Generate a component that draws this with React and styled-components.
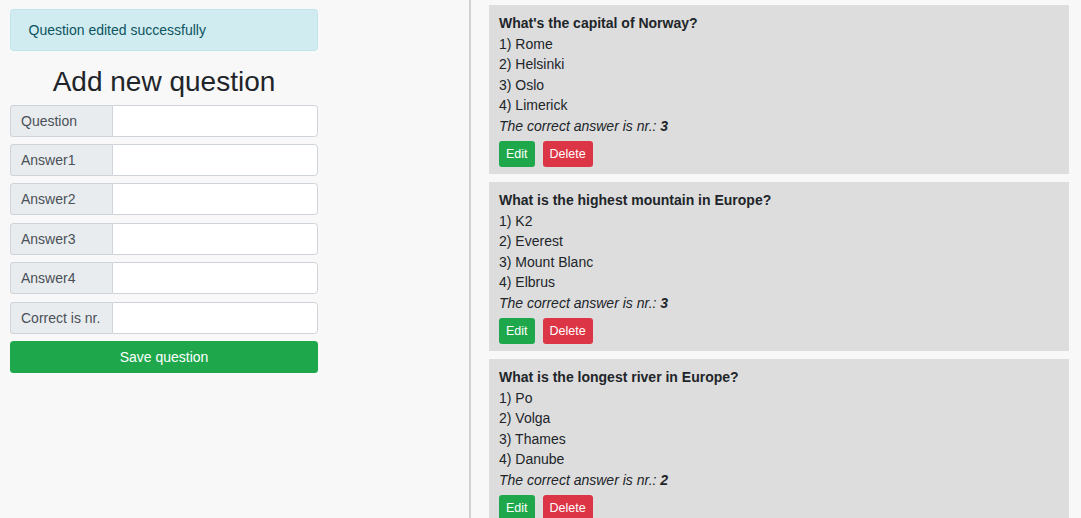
import React from "react";
import styled, { createGlobalStyle } from "styled-components";

const Global = createGlobalStyle`
  html, body { margin: 0; padding: 0; background: #f8f8f8; }
  body {
    font-family: "Liberation Sans", Arial, Helvetica, sans-serif;
    font-size: 14px;
    color: #212529;
  }
  * { box-sizing: border-box; }
`;

const Page = styled.div`
  display: flex;
  height: 518px;
  overflow: hidden;
`;

const LeftPane = styled.div`
  width: 471px;
  flex: none;
  border-right: 2px solid #d2d2d2;
  padding: 9px 0 0 10px;
`;

const Form = styled.div`
  width: 308px;
  display: flex;
  flex-direction: column;
`;

const Alert = styled.div`
  height: 42px;
  padding: 0 17.5px;
  display: flex;
  align-items: center;
  background: #d1ecf1;
  border: 1px solid #bee5eb;
  border-radius: 3.5px;
  color: #0c5460;
  margin-bottom: 14px;
`;

const Title = styled.h2`
  margin: 0 0 6px;
  font-size: 28px;
  font-weight: 400;
  line-height: 33.6px;
  text-align: center;
  color: #212529;
`;

const Group = styled.div`
  display: flex;
  height: 32px;
  margin-bottom: 7.4px;
`;

const Label = styled.span`
  width: 102px;
  flex: none;
  display: flex;
  align-items: center;
  padding-left: 10px;
  background: #e9ecef;
  border: 1px solid #ced4da;
  border-right: none;
  border-radius: 3.5px 0 0 3.5px;
  color: #495057;
`;

const Input = styled.input`
  flex: 1;
  min-width: 0;
  border: 1px solid #ced4da;
  border-radius: 0 3.5px 3.5px 0;
  background: #fff;
  font: inherit;
  padding: 0 10px;
  outline: none;
`;

const SaveButton = styled.button`
  height: 32px;
  border: none;
  border-radius: 3.5px;
  background: #1ea84b;
  color: #fff;
  font: inherit;
  font-size: 14px;
`;

const RightPane = styled.div`
  flex: 1;
  padding: 5px 12px 0 18px;
  display: flex;
  flex-direction: column;
  gap: 8px;
`;

const Card = styled.div`
  background: #dddddd;
  padding: 8px 10px 7px;
  flex: none;
`;

const Line = styled.div`
  line-height: 20.5px;
  font-weight: ${(p) => (p.$bold ? 700 : 400)};
  font-style: ${(p) => (p.$italic ? "italic" : "normal")};
`;

const Actions = styled.div`
  display: flex;
  gap: 8px;
  margin-top: 5px;
`;

const SmallButton = styled.button`
  height: 26px;
  padding: 0 7px;
  border: none;
  border-radius: 3px;
  font: inherit;
  font-size: 12.5px;
  color: #fff;
  background: ${(p) => (p.$variant === "danger" ? "#dc3545" : "#1ea84b")};
`;

const questions = [
  {
    q: "What's the capital of Norway?",
    a: ["Rome", "Helsinki", "Oslo", "Limerick"],
    c: 3,
  },
  {
    q: "What is the highest mountain in Europe?",
    a: ["K2", "Everest", "Mount Blanc", "Elbrus"],
    c: 3,
  },
  {
    q: "What is the longest river in Europe?",
    a: ["Po", "Volga", "Thames", "Danube"],
    c: 2,
  },
];

const fields = ["Question", "Answer1", "Answer2", "Answer3", "Answer4", "Correct is nr."];

export default function App() {
  return (
    <>
      <Global />
      <Page>
        <LeftPane>
          <Form>
            <Alert>Question edited successfully</Alert>
            <Title>Add new question</Title>
            {fields.map((f) => (
              <Group key={f}>
                <Label>{f}</Label>
                <Input />
              </Group>
            ))}
            <SaveButton>Save question</SaveButton>
          </Form>
        </LeftPane>
        <RightPane>
          {questions.map((item) => (
            <Card key={item.q}>
              <Line $bold>{item.q}</Line>
              {item.a.map((ans, i) => (
                <Line key={ans}>
                  {i + 1}) {ans}
                </Line>
              ))}
              <Line $italic>
                The correct answer is nr.: <b>{item.c}</b>
              </Line>
              <Actions>
                <SmallButton>Edit</SmallButton>
                <SmallButton $variant="danger">Delete</SmallButton>
              </Actions>
            </Card>
          ))}
        </RightPane>
      </Page>
    </>
  );
}
